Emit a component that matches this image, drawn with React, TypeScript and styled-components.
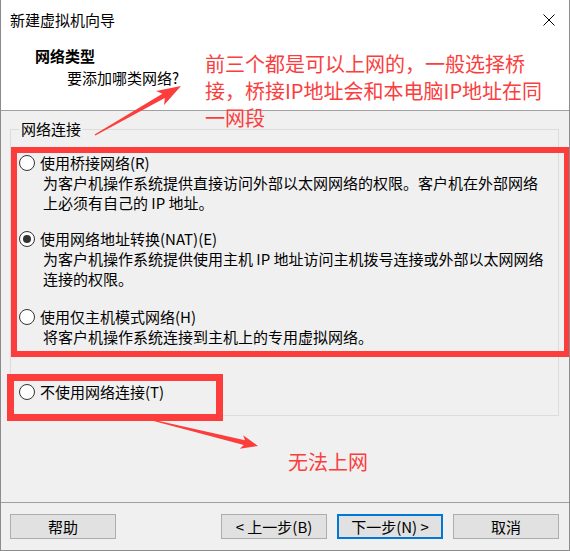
import styled, { createGlobalStyle } from "styled-components";

const GlobalStyle = createGlobalStyle`
  html, body {
    margin: 0;
    padding: 0;
    background: #ffffff;
  }
  body {
    font-family: "Noto Sans CJK SC", "Noto Sans", sans-serif;
  }
  * {
    box-sizing: border-box;
  }
`;

const Window = styled.div`
  position: relative;
  width: 570px;
  height: 551px;
  display: flex;
  flex-direction: column;
  border: 1px solid #8c8c8c;
  border-top: none;
  background: #f0f0f0;
  overflow: hidden;
  font-size: 15px;
  color: #000;
`;

const Header = styled.div`
  height: 111px;
  background: #ffffff;
  border-bottom: 1px solid #a0a0a0;
`;

const TitleBar = styled.div`
  height: 40px;
  display: flex;
  align-items: center;
  justify-content: space-between;
  padding: 0 14px 0 9px;
  line-height: 20px;
`;

const CloseButton = styled.div`
  width: 12px;
  height: 12px;
  display: flex;
`;

const HeaderBody = styled.div`
  padding: 5px 0 0 34px;
`;

const Heading = styled.div`
  font-weight: bold;
  line-height: 22px;
`;

const SubHeading = styled.div`
  line-height: 22px;
  padding-left: 32px;
`;

const Body = styled.div`
  flex: 1;
  padding: 8px 10px 0 9px;
`;

const GroupBox = styled.fieldset`
  margin: 0;
  padding: 14px 8px 13px 8px;
  border: 1px solid #dcdcdc;
  min-width: 0;
`;

const GroupTitle = styled.legend`
  padding: 0 2px;
  line-height: 20px;
`;

const Option = styled.div<{ $gap: number }>`
  margin-top: ${({ $gap }) => $gap}px;
  &:first-of-type {
    margin-top: 0;
  }
`;

const OptionLabel = styled.div`
  display: flex;
  align-items: center;
  gap: 5px;
  line-height: 20px;
`;

const Radio = styled.span<{ $checked?: boolean }>`
  position: relative;
  width: 16px;
  height: 16px;
  border-radius: 50%;
  border: 1px solid #333333;
  background: #ffffff;
  flex-shrink: 0;
  &::after {
    content: "";
    display: ${({ $checked }) => ($checked ? "block" : "none")};
    position: absolute;
    left: 3px;
    top: 3px;
    width: 8px;
    height: 8px;
    border-radius: 50%;
    background: #333333;
  }
`;

const Description = styled.div`
  padding-left: 24px;
  line-height: 20px;
  white-space: nowrap;
`;

const Footer = styled.div`
  display: flex;
  justify-content: space-between;
  padding: 11px 10px 0 9px;
  height: 48px;
  border-top: 1px solid #a0a0a0;
`;

const NavGroup = styled.div`
  display: flex;
  gap: 10px;
`;

const Button = styled.div<{ $default?: boolean }>`
  width: 106px;
  height: 25px;
  display: flex;
  align-items: center;
  justify-content: center;
  background: #e1e1e1;
  border: ${({ $default }) =>
    $default ? "2px solid #0078d7" : "1px solid #adadad"};
  font-size: 15px;
  line-height: 20px;
`;

const Highlight = styled.div<{ $w: number; $h: number; $x: number; $y: number; $stroke: number }>`
  position: absolute;
  left: ${({ $x }) => $x}px;
  top: ${({ $y }) => $y}px;
  width: ${({ $w }) => $w}px;
  height: ${({ $h }) => $h}px;
  border: ${({ $stroke }) => $stroke}px solid #fd3c3c;
  pointer-events: none;
`;

const Note = styled.div<{ $x: number; $y: number }>`
  position: absolute;
  left: ${({ $x }) => $x}px;
  top: ${({ $y }) => $y}px;
  color: #fa3e3e;
  font-size: 20px;
  line-height: 27px;
  white-space: nowrap;
`;

const ArrowLayer = styled.svg`
  position: absolute;
  left: -1px;
  top: 0;
  pointer-events: none;
`;

const options = [
  {
    label: "使用桥接网络(R)",
    lines: [
      "为客户机操作系统提供直接访问外部以太网网络的权限。客户机在外部网络",
      "上必须有自己的 IP 地址。",
    ],
    gap: 0,
  },
  {
    label: "使用网络地址转换(NAT)(E)",
    lines: [
      "为客户机操作系统提供使用主机 IP 地址访问主机拨号连接或外部以太网网络",
      "连接的权限。",
    ],
    gap: 16,
    checked: true,
  },
  {
    label: "使用仅主机模式网络(H)",
    lines: ["将客户机操作系统连接到主机上的专用虚拟网络。"],
    gap: 18,
  },
  {
    label: "不使用网络连接(T)",
    lines: [],
    gap: 35,
  },
];

export default function App() {
  return (
    <>
      <GlobalStyle />
      <Window>
        <Header>
          <TitleBar>
            <span>新建虚拟机向导</span>
            <CloseButton>
              <svg width="12" height="12" viewBox="0 0 12 12">
                <path d="M0.5 0.5 L11.5 11.5 M11.5 0.5 L0.5 11.5" stroke="#000" strokeWidth="1" />
              </svg>
            </CloseButton>
          </TitleBar>
          <HeaderBody>
            <Heading>网络类型</Heading>
            <SubHeading>要添加哪类网络?</SubHeading>
          </HeaderBody>
        </Header>
        <Body>
          <GroupBox>
            <GroupTitle>网络连接</GroupTitle>
            {options.map((opt, idx) => (
              <Option $gap={opt.gap} key={idx}>
                <OptionLabel>
                  <Radio $checked={opt.checked} />
                  <span>{opt.label}</span>
                </OptionLabel>
                {opt.lines.map((line, i) => (
                  <Description key={i}>{line}</Description>
                ))}
              </Option>
            ))}
          </GroupBox>
        </Body>
        <Footer>
          <Button>帮助</Button>
          <NavGroup>
            <Button>&lt; 上一步(B)</Button>
            <Button $default>下一步(N) &gt;</Button>
            <Button>取消</Button>
          </NavGroup>
        </Footer>

        <Highlight $x={10} $y={147} $w={559} $h={210} $stroke={6} />
        <Highlight $x={6} $y={374} $w={216} $h={47} $stroke={7} />
        <Note $x={204} $y={50}>
          前三个都是可以上网的，一般选择桥
          <br />
          接，桥接IP地址会和本电脑IP地址在同
          <br />
          一网段
        </Note>
        <Note $x={287} $y={448}>无法上网</Note>
        <ArrowLayer width="570" height="551" viewBox="0 0 570 551">
          <polygon
            fill="#fd3c3c"
            points="94.6,134.6 95.4,135.4 164.8,98.1 164.1,104.9 181,86 156.1,90.9 162.4,93.7"
          />
          <polygon
            fill="#fd3c3c"
            points="152.2,419.5 151.8,420.5 243.8,445.1 239.8,448.8 258,446 243.2,435.2 245,440.3"
          />
        </ArrowLayer>
      </Window>
    </>
  );
}
